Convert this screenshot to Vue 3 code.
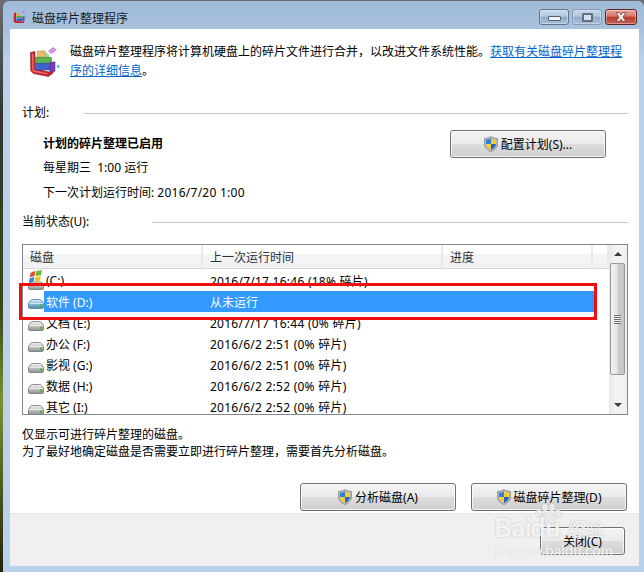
<script setup>
const columns = [
  { label: '磁盘', width: 180 },
  { label: '上一次运行时间', width: 240 },
  { label: '进度', width: 150 },
  { label: '', width: 16 }
]
const rows = [
  { name: '(C:)', when: '2016/7/17 16:46 (18% 碎片)', icon: 'sys' },
  { name: '软件 (D:)', when: '从未运行', icon: 'drive', selected: true },
  { name: '文档 (E:)', when: '2016/7/17 16:44 (0% 碎片)', icon: 'drive' },
  { name: '办公 (F:)', when: '2016/6/2 2:51 (0% 碎片)', icon: 'drive' },
  { name: '影视 (G:)', when: '2016/6/2 2:51 (0% 碎片)', icon: 'drive' },
  { name: '数据 (H:)', when: '2016/6/2 2:52 (0% 碎片)', icon: 'drive' },
  { name: '其它 (I:)', when: '2016/6/2 2:52 (0% 碎片)', icon: 'drive' }
]
</script>

<template>
  <div class="stage">
    <svg class="defs" width="0" height="0" aria-hidden="true">
      <defs>
        <linearGradient id="driveBody" x1="0" y1="0" x2="0" y2="1">
          <stop offset="0" stop-color="#f2f2f2" />
          <stop offset="0.45" stop-color="#c9c9c9" />
          <stop offset="1" stop-color="#8b8f92" />
        </linearGradient>
        <linearGradient id="driveBlue" x1="0" y1="0" x2="0" y2="1">
          <stop offset="0" stop-color="#d9eef7" />
          <stop offset="0.45" stop-color="#8ec3da" />
          <stop offset="1" stop-color="#4f86a8" />
        </linearGradient>
      </defs>
      <symbol id="shield" viewBox="0 0 14 16">
        <path d="M7 .6 C9 1.9 11 2.4 13.4 2.5 V8 C13.4 11.6 10.6 14 7 15.5 C3.4 14 .6 11.6 .6 8 V2.5 C3 2.4 5 1.9 7 .6Z" fill="#b9bcc0" stroke="#7d8186" stroke-width=".8" />
        <path d="M7 2.2 C5.4 3.2 3.8 3.7 2 3.8 V8 H7Z" fill="#2f7fd6" />
        <path d="M7 2.2 C8.6 3.2 10.2 3.7 12 3.8 V8 H7Z" fill="#f7cf2d" />
        <path d="M2 8 C2.1 10.6 4.2 12.6 7 13.9 V8Z" fill="#f7cf2d" />
        <path d="M12 8 C11.9 10.6 9.8 12.6 7 13.9 V8Z" fill="#2468bd" />
      </symbol>
      <symbol id="drive" viewBox="0 0 16 16">
        <path d="M2.5 7.5 Q3 6.5 4.5 6.5 H11.5 Q13 6.5 13.5 7.5 L15.5 10.5 V14 Q15.5 15.5 14 15.5 H2 Q.5 15.5 .5 14 V10.5Z" fill="url(#driveBody)" stroke="#6e7275" stroke-width=".8" />
        <path d="M1 10.5 H15" stroke="#f4f4f4" stroke-width=".8" />
        <rect x="12.2" y="11.4" width="2" height="2.8" fill="#47b81f" />
      </symbol>
      <symbol id="driveSel" viewBox="0 0 16 16">
        <path d="M2.5 6.5 Q3 5.5 4.5 5.5 H11.5 Q13 5.5 13.5 6.5 L15.5 9.5 V13 Q15.5 14.5 14 14.5 H2 Q.5 14.5 .5 13 V9.5Z" fill="url(#driveBlue)" stroke="#4d7d9c" stroke-width=".8" />
        <path d="M1 9.5 H15" stroke="#dcf0f8" stroke-width=".8" />
        <rect x="12.2" y="10.4" width="2" height="2.8" fill="#44b52a" />
      </symbol>
      <symbol id="sys" viewBox="0 0 16 20">
        <path d="M1 14 L3 12 H13 L15.5 14.5 V18 Q15.5 19.4 14 19.4 H2 Q.5 19.4 .5 18 V14Z" fill="url(#driveBody)" stroke="#6e7275" stroke-width=".8" />
        <path d="M2.6 2.8 L7.4 .8 L6.6 6 L1.8 7.6Z" fill="#e4512b" />
        <path d="M8.4 .8 L14 .2 L13 5.2 L7.6 6Z" fill="#6cbb2e" />
        <path d="M1.6 8.6 L6.4 7 L5.6 11.6 L.8 12.8Z" fill="#2f84d8" />
        <path d="M7.4 7 L12.8 6.2 L12 10.8 L6.6 11.6Z" fill="#f5c321" />
      </symbol>
    </svg>

    <div class="window">
      <div class="titlebar">
        <svg class="title-icon" viewBox="0 0 14 14" width="14" height="14" aria-hidden="true">
          <path d="M1 3 L3 2.5 V11 L11 11.5 V13 L2.5 13 L.5 11.5Z" fill="#c4262b" />
          <rect x="3.5" y="3" width="3.5" height="3" fill="#e9a73a" />
          <rect x="3.5" y="6" width="6" height="2.4" fill="#4ead4a" />
          <rect x="3.5" y="8.4" width="6" height="2.6" fill="#3a62c8" />
          <rect x="9.6" y="6.5" width="2" height="4.5" fill="#7a3fb0" />
          <path d="M8.8 2.2 L10.2 .6 L12.2 1.8 L10.8 3.4Z" fill="#c77ad6" />
          <rect x="12.4" y="5.6" width="1.4" height="1.4" fill="#3fb6ea" />
        </svg>
        <span class="title-text">磁盘碎片整理程序</span>
        <div class="controls">
          <div class="ctl ctl-min"><span class="glyph-min"></span></div>
          <div class="ctl ctl-max"><span class="glyph-max"></span></div>
          <div class="ctl ctl-close">
            <svg viewBox="0 0 16 12" width="16" height="12" aria-hidden="true">
              <path d="M3 1.5 H6.2 L8 3.8 L9.8 1.5 H13 L10 6 L13 10.5 H9.8 L8 8.2 L6.2 10.5 H3 L6 6Z" fill="#f3eeee" stroke="#6b2a28" stroke-width=".7" />
            </svg>
          </div>
        </div>
      </div>

      <div class="client">
        <div class="content">
          <div class="intro">
            <svg class="app-icon" viewBox="0 0 30 30" width="30" height="30" aria-hidden="true">
              <path d="M.5 5.5 L5 4.5 V22 L19 25 L23 23.5 V26 L18.5 29.5 L3.5 26.5 L.8 24Z" fill="#c9252b" stroke="#8d1518" stroke-width=".6" />
              <path d="M2 7 L3.6 6.6 V23 L17.5 26.2 V27.6 L4 25 L2.2 23.4Z" fill="#e9696c" />
              <rect x="7.5" y="4" width="7.5" height="6.2" fill="#eabd6a" stroke="#b07f2a" stroke-width=".5" />
              <path d="M15 4.4 L19 7.6 V10.2 H15Z" fill="#a7d6a8" />
              <rect x="5.5" y="10.2" width="16" height="6" fill="#5ab34f" stroke="#2f7b2d" stroke-width=".5" />
              <rect x="5.5" y="16.2" width="14.5" height="6.8" fill="#3f63cb" stroke="#263f95" stroke-width=".5" />
              <path d="M20 15.5 L25 14.8 V24.2 L20 25Z" fill="#7d3db0" stroke="#552184" stroke-width=".5" />
              <path d="M18.5 4.2 L23 .6 L26.2 2.8 L21.6 6.6Z" fill="#d79ae0" stroke="#a763bb" stroke-width=".6" />
              <rect x="27" y="18" width="2.4" height="2.8" fill="#43c0ee" />
            </svg>
            <p class="intro-text">磁盘碎片整理程序将计算机硬盘上的碎片文件进行合并，以改进文件系统性能。<a class="link">获取有关磁盘碎片整理程序的详细信息</a>。</p>
          </div>

          <div class="group-label first"><span>计划:</span><i class="rule"></i></div>

          <div class="schedule">
            <div class="schedule-text">
              <div class="bold">计划的碎片整理已启用</div>
              <div class="mid">每星期三&nbsp; 1:00 运行</div>
              <div>下一次计划运行时间: <span class="wide">2016/7/20 1:00</span></div>
            </div>
            <button class="btn btn-config">
              <svg class="shield" width="14" height="16" aria-hidden="true"><use href="#shield" /></svg>配置计划(S)...
            </button>
          </div>

          <div class="group-label second"><span>当前状态(U):</span><i class="rule"></i></div>

          <div class="listbox">
            <div class="list-main">
              <div class="list-head">
                <div v-for="c in columns" :key="c.width" class="head-cell" :style="{ width: c.width + 'px' }">{{ c.label }}</div>
              </div>
              <div class="list-body">
                <div v-for="r in rows" :key="r.name" class="row">
                  <svg class="row-icon" :class="{ tall: r.icon === 'sys' }" width="16" :height="r.icon === 'sys' ? 20 : 16" aria-hidden="true">
                    <use :href="r.selected ? '#driveSel' : '#' + r.icon" />
                  </svg>
                  <div class="row-fill" :class="{ selected: r.selected }">
                    <span class="cell-name">{{ r.name }}</span>
                    <span :class="{ wide: !r.selected }">{{ r.when }}</span>
                  </div>
                </div>
              </div>
            </div>
            <div class="scrollbar">
              <div class="arrow"><i class="tri up"></i></div>
              <div class="track">
                <div class="thumb"><span class="grip"></span></div>
              </div>
              <div class="arrow"><i class="tri down"></i></div>
            </div>
          </div>

          <div class="notes">
            <div>仅显示可进行碎片整理的磁盘。</div>
            <div>为了最好地确定磁盘是否需要立即进行碎片整理，需要首先分析磁盘。</div>
          </div>

          <div class="actions">
            <button class="btn btn-wide">
              <svg class="shield" width="14" height="16" aria-hidden="true"><use href="#shield" /></svg>分析磁盘(A)
            </button>
            <button class="btn btn-wide">
              <svg class="shield" width="14" height="16" aria-hidden="true"><use href="#shield" /></svg>磁盘碎片整理(D)
            </button>
          </div>
        </div>

        <div class="footer">
          <button class="btn btn-close">关闭(C)</button>
        </div>
      </div>
    </div>

    <div class="highlight"></div>

    <div class="watermark">
      <svg class="paw" viewBox="0 0 30 22" width="30" height="22" aria-hidden="true">
        <ellipse cx="6" cy="10" rx="3" ry="3.6" />
        <ellipse cx="12" cy="4.5" rx="3" ry="3.8" />
        <ellipse cx="19" cy="4.5" rx="3" ry="3.8" />
        <ellipse cx="25" cy="10" rx="3" ry="3.6" />
        <path d="M15 9.5 C19 9.5 23 15 22 18.5 C21 21.5 17.5 20 15 20 C12.5 20 9 21.5 8 18.5 C7 15 11 9.5 15 9.5Z" />
      </svg>
      <span class="wm-bai">Bai</span>
      <span class="wm-du">du</span>
      <span class="wm-jy">经验</span>
      <span class="wm-url">jingyan.baidu.com</span>
    </div>
  </div>
</template>

<style scoped>
.stage {
  position: relative;
  width: 644px;
  height: 572px;
  overflow: hidden;
  background: linear-gradient(180deg, #6a6e72 0, #333 20%, #3a4a18 55%, #7d8f30 70%, #20240f 100%);
  font-family: "Noto Sans", "Noto Sans CJK SC", sans-serif;
  font-size: 12px;
  color: #000;
}
.defs {
  position: absolute;
}
.window {
  display: flex;
  flex-direction: column;
  height: 571px;
  margin: 1px 0 0 3px;
  border-radius: 6px 6px 0 0;
  background: linear-gradient(180deg, #a0bbd8 0, #a8c2de 28px, #b9d1ea 60px);
}
.titlebar {
  display: flex;
  align-items: center;
  height: 28px;
  flex: none;
  padding: 0 7px 0 10px;
}
.title-icon {
  margin-right: 5px;
  margin-top: 3px;
}
.title-text {
  margin-top: 7px;
  line-height: 18px;
  color: #141c24;
}
.controls {
  display: flex;
  align-items: flex-start;
  gap: 3px;
  margin-left: auto;
  margin-top: 8px;
  height: 28px;
  padding-top: 8px;
}
.ctl {
  display: flex;
  align-items: center;
  justify-content: center;
  width: 30px;
  height: 16px;
  box-sizing: border-box;
  border: 1px solid #5f7389;
  border-radius: 3px;
  background: linear-gradient(180deg, #c9d9ea 0, #b4c9e0 45%, #8faac8 50%, #a7c0dc 100%);
  box-shadow: inset 0 0 0 1px rgba(255, 255, 255, .35);
}
.ctl-max {
  border-color: #8296ac;
  opacity: .85;
}
.ctl-close {
  width: 32px;
  border-color: #5b2428;
  background: linear-gradient(180deg, #e6a79d 0, #d9766a 45%, #b93a2d 50%, #c9604f 100%);
}
.glyph-min {
  display: block;
  width: 13px;
  height: 5px;
  margin-top: 3px;
  box-sizing: border-box;
  border: 1px solid #55616e;
  border-radius: 1px;
  background: #f1f3f6;
}
.glyph-max {
  display: block;
  width: 11px;
  height: 9px;
  box-sizing: border-box;
  border: 2px solid #56626f;
  border-radius: 1px;
  background: #dfe7f0;
}
.client {
  display: flex;
  flex-direction: column;
  height: 537px;
  margin-right: 5px;
  margin-left: 7px;
  flex: none;
}
.content {
  height: 484px;
  flex: none;
  box-sizing: border-box;
  padding: 0 11px 0 12px;
  background: #fff;
}
.intro {
  display: flex;
  padding: 13px 0 0 8px;
}
.app-icon {
  flex: none;
  margin: 5px 10px 0 0;
}
.intro-text {
  margin: 0;
  width: 556px;
  line-height: 19px;
}
.link {
  color: #0066cc;
  text-decoration: underline;
}
.wide {
  letter-spacing: .25px;
}
.group-label {
  display: flex;
  align-items: center;
  height: 18px;
  line-height: 18px;
}
.group-label.first {
  margin-top: 24px;
}
.group-label.first .rule {
  margin-left: 35px;
}
.group-label.second .rule {
  margin-left: 63px;
}
.rule {
  display: block;
  flex: 1;
  height: 1px;
  margin-top: 1px;
  background: #c8c8c8;
}
.schedule {
  display: flex;
  justify-content: space-between;
  align-items: flex-start;
  height: 91px;
  padding-right: 22px;
}
.schedule-text {
  padding: 10px 0 0 21px;
  line-height: 24px;
}
.mid {
  margin-bottom: 1px;
}
.bold {
  font-weight: 700;
}
.btn {
  display: flex;
  align-items: center;
  justify-content: center;
  height: 28px;
  box-sizing: border-box;
  padding: 0;
  border: 1px solid #707070;
  border-radius: 3px;
  background: linear-gradient(180deg, #f3f3f3 0, #ebebeb 48%, #dddddd 50%, #cfcfcf 100%);
  box-shadow: inset 0 0 0 1px rgba(255, 255, 255, .75);
  font: inherit;
  color: #000;
}
.shield {
  margin-right: 3px;
  flex: none;
}
.btn-config {
  width: 156px;
  margin-top: 8px;
}
.listbox {
  display: flex;
  height: 171px;
  margin-top: 13px;
  box-sizing: border-box;
  border: 1px solid #82878f;
  background: #fff;
}
.list-main {
  flex: 1;
  min-width: 0;
  overflow: hidden;
}
.list-head {
  display: flex;
  height: 24px;
  box-sizing: border-box;
  border-bottom: 1px solid #d5d5d5;
  background: linear-gradient(180deg, #fff 0, #fff 40%, #f3f4f6 41%, #f1f2f4 100%);
}
.head-cell {
  flex: none;
  box-sizing: border-box;
  padding: 1px 0 0 7px;
  line-height: 24px;
  color: #2a3440;
  border-right: 2px solid #e8eaec;
}
.list-body {
  padding-top: 1px;
}
.row {
  display: flex;
  align-items: center;
  height: 21px;
  padding: 0 15px 0 5px;
}
.row-icon {
  flex: none;
}
.row-icon.tall {
  margin-top: -1px;
}
.row-fill {
  display: flex;
  flex: 1;
  align-items: center;
  height: 21px;
}
.row-fill.selected {
  background: #3399ff;
  color: #fff;
}
.cell-name {
  flex: none;
  width: 166px;
  padding-left: 2px;
  box-sizing: border-box;
}
.scrollbar {
  display: flex;
  flex-direction: column;
  flex: none;
  width: 18px;
  background: linear-gradient(90deg, #e8e8e8, #f4f4f4 40%, #f0f0f0);
}
.arrow {
  display: flex;
  align-items: center;
  justify-content: center;
  height: 18px;
  flex: none;
}
.tri {
  display: block;
  width: 0;
  height: 0;
  border-left: 4px solid transparent;
  border-right: 4px solid transparent;
}
.tri.up {
  border-bottom: 4px solid #3b3b3b;
}
.tri.down {
  border-top: 4px solid #3b3b3b;
}
.track {
  flex: 1;
}
.thumb {
  display: flex;
  align-items: center;
  justify-content: center;
  width: 15px;
  height: 112px;
  margin-left: 1px;
  box-sizing: border-box;
  border: 1px solid #9a9a9a;
  border-radius: 2px;
  background: linear-gradient(90deg, #f1f1f1 0, #e6e6e6 45%, #cdcdcd 55%, #c4c4c4 100%);
}
.grip {
  display: block;
  width: 7px;
  height: 9px;
  background: repeating-linear-gradient(180deg, #6e6e6e 0, #6e6e6e 1px, #efefef 1px, #efefef 2px);
}
.notes {
  margin-top: 11px;
  line-height: 17px;
}
.actions {
  display: flex;
  justify-content: flex-end;
  gap: 15px;
  margin-top: 23px;
  padding-right: 1px;
}
.btn-wide {
  width: 156px;
}
.footer {
  display: flex;
  justify-content: flex-end;
  flex: 1;
  box-sizing: border-box;
  padding: 14px 14px 0 0;
  border-top: 1px solid #e6e6e6;
  background: #f0f0f0;
}
.btn-close {
  width: 85px;
  margin-top: -1px;
}
.highlight {
  position: absolute;
  left: 19px;
  top: 283px;
  width: 578px;
  height: 37px;
  box-sizing: border-box;
  border: 3px solid #f00f0f;
}
.watermark {
  position: absolute;
  left: 490px;
  top: 500px;
  width: 124px;
  height: 60px;
  color: rgba(255, 255, 255, .82);
  font-family: Lato, "Noto Sans CJK SC", sans-serif;
  text-shadow: 0 0 2px rgba(130, 130, 130, .5);
  pointer-events: none;
}
.paw {
  position: absolute;
  left: 43px;
  top: 3px;
  fill: rgba(240, 240, 240, .85);
  filter: drop-shadow(0 0 1px rgba(150, 150, 150, .6));
}
.wm-bai,
.wm-du,
.wm-jy,
.wm-url {
  position: absolute;
  white-space: nowrap;
}
.wm-bai {
  left: 4px;
  top: 12px;
  font-size: 27px;
  line-height: 30px;
  font-weight: 700;
}
.wm-du {
  left: 40px;
  top: 12px;
  font-size: 27px;
  line-height: 30px;
  font-weight: 700;
}
.wm-jy {
  left: 78px;
  top: 19px;
  font-size: 18px;
  line-height: 20px;
}
.wm-url {
  left: 5px;
  top: 44px;
  font-size: 15px;
  line-height: 12px;
  text-shadow: 0 0 1px rgba(150, 150, 150, .45);
}
</style>

<style>
html,
body {
  margin: 0;
  overflow: hidden;
}
</style>
